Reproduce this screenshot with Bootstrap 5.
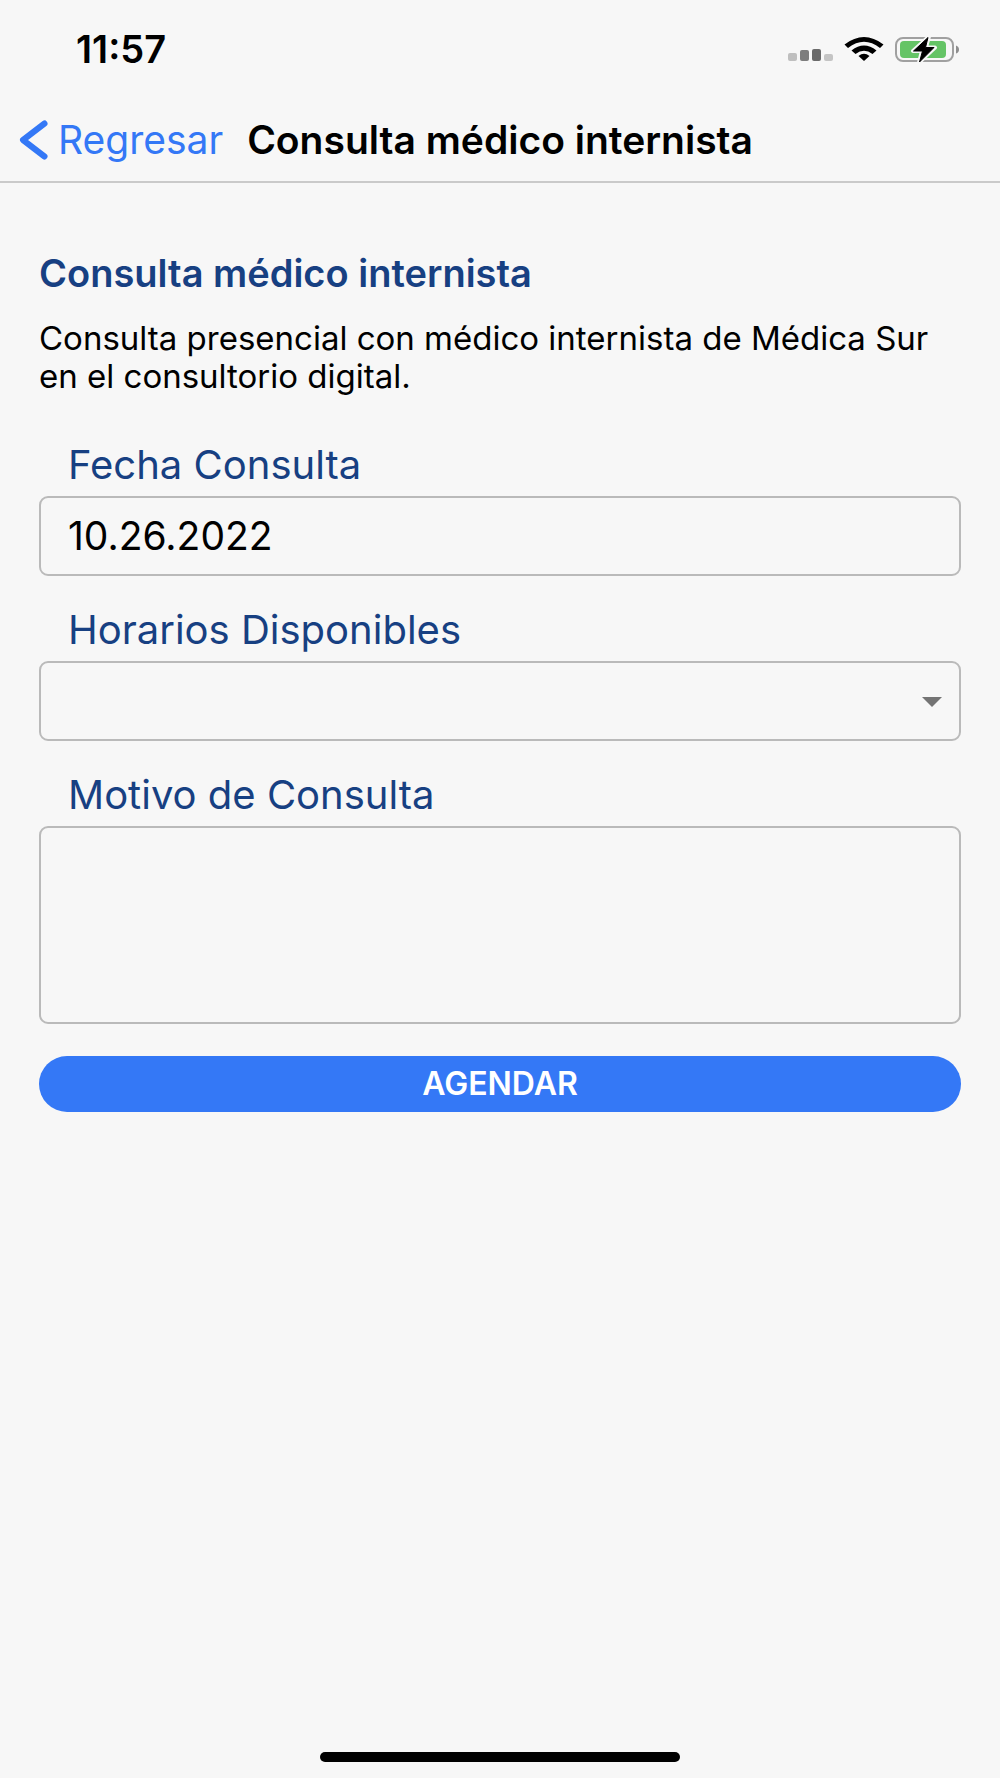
<!DOCTYPE html>
<html lang="es">
<head>
<meta charset="utf-8">
<meta name="viewport" content="width=device-width, initial-scale=1">
<title>Consulta médico internista</title>
<link href="https://cdn.jsdelivr.net/npm/bootstrap@5.3.0/dist/css/bootstrap.min.css" rel="stylesheet">
<style>
  body { font-family: Inter, "Liberation Sans", sans-serif; background: #f7f7f7; color: #000; }
  .status-bar { height: 98px; padding: 0 40px 0 76px; }
  .clock { font-size: 38px; line-height: 44px; }
  .app-nav { height: 85px; padding: 0 20px 0 19px; border-bottom: 2px solid #cacaca; gap: 24px; }
  .back-link { color: #3478f6; font-size: 39px; line-height: 44px; gap: 10px; }
  .app-title { font-size: 39px; line-height: 44px; }
  .app-main { padding: 68px 39px 0; }
  .intro-title { color: #174082; font-size: 38px; line-height: 44px; margin-bottom: 24px; }
  .intro-text { font-size: 33px; line-height: 38px; margin-bottom: 48px; }
  .field { margin-bottom: 32px; }
  .field-label { display: block; color: #174082; font-size: 40px; line-height: 44px; padding-left: 29px; margin-bottom: 9px; }
  .field-box, .field-box:focus { background-color: transparent; border: 2px solid #bababa; border-radius: 9px; color: #000; font-size: 39px; line-height: 44px; padding: 16px 27px; }
  .select-wrap::after { content: ""; position: absolute; right: 19px; top: 36px; border: solid transparent; border-width: 10px 10px 0; border-top-color: #747474; pointer-events: none; }
  .field-select { appearance: none; background-image: none; height: 80px; }
  .field-area { height: 198px; resize: none; }
  .book-btn { background: #3478f6; color: #fff; font-size: 32px; line-height: 36px; padding: 10px; border: 0; }
  .home-bar { width: 36%; height: 10px; background: #000; margin-bottom: 16px; }
</style>
</head>
<body class="min-vh-100 d-flex flex-column">
<div class="status-bar d-flex justify-content-between align-items-center">
  <span class="clock fw-semibold">11:57</span>
  <svg width="174" height="30" viewBox="0 0 174 30" role="img" aria-label="Señal, wifi y batería">
    <g>
      <rect x="2" y="19" width="9" height="8" rx="2" fill="#bfbfbf"/>
      <rect x="14" y="16" width="9" height="11" rx="2" fill="#7d7d7d"/>
      <rect x="26" y="15" width="9" height="12" rx="2" fill="#6a6a6a"/>
      <rect x="38" y="20" width="9" height="7" rx="2" fill="#c4c4c4"/>
    </g>
    <path d="M58.500 10.500 62 14Q78 1.500 94 14L97.500 10.500Q78-4.500 58.500 10.500Z"/>
    <path d="M65.500 16.500 69.500 20Q78 13.500 86.500 20L90.500 16.500Q78 6.500 65.500 16.500Z"/>
    <path d="M72.500 22 78 27 83.500 22Q78 17.500 72.500 22Z"/>
    <rect x="110" y="4" width="57" height="23" rx="7" fill="none" stroke="#a0a0a0" stroke-width="2"/>
    <rect x="114" y="7" width="46" height="17" rx="4" fill="#65c466"/>
    <path d="M170 11.500Q173 12.500 173 15.500T170 19.500Z" fill="#8e8e8e"/>
    <path d="M143 2.500 127 17H136L133 28.500 149 13.500H140Z" stroke="#f7f7f7" stroke-width="4" stroke-linejoin="round"/>
    <path d="M142 3.500 127.500 17H136.500L133.500 28 148 13.500H139.500Z" stroke="#000" stroke-linejoin="round"/>
  </svg>
</div>
<header class="app-nav d-flex align-items-center">
  <a href="#" class="back-link d-flex align-items-center text-decoration-none">
    <svg width="29" height="42" viewBox="0 0 29 42" aria-hidden="true"><path d="M25.500 4.500 4 21 25.500 37.500" fill="none" stroke="#3478f6" stroke-width="6" stroke-linecap="round" stroke-linejoin="round"/></svg>
    <span>Regresar</span>
  </a>
  <h1 class="app-title fw-semibold m-0 text-nowrap">Consulta médico internista</h1>
</header>
<main class="app-main flex-grow-1">
  <h2 class="intro-title fw-semibold">Consulta médico internista</h2>
  <p class="intro-text">Consulta presencial con médico internista de Médica Sur en el consultorio digital.</p>
  <form>
    <div class="field">
      <label class="field-label" for="fecha">Fecha Consulta</label>
      <input class="form-control field-box" type="text" id="fecha" value="10.26.2022">
    </div>
    <div class="field">
      <label class="field-label" for="horario">Horarios Disponibles</label>
      <div class="select-wrap position-relative">
        <select class="form-select field-box field-select" id="horario"><option value="" selected></option></select>
      </div>
    </div>
    <div class="field">
      <label class="field-label" for="motivo">Motivo de Consulta</label>
      <textarea class="form-control field-box field-area" id="motivo"></textarea>
    </div>
    <button type="button" class="btn book-btn rounded-pill w-100 fw-semibold">AGENDAR</button>
  </form>
</main>
<div class="home-bar rounded-pill align-self-center"></div>
<script src="https://cdn.jsdelivr.net/npm/bootstrap@5.3.0/dist/js/bootstrap.bundle.min.js"></script>
</body>
</html>
